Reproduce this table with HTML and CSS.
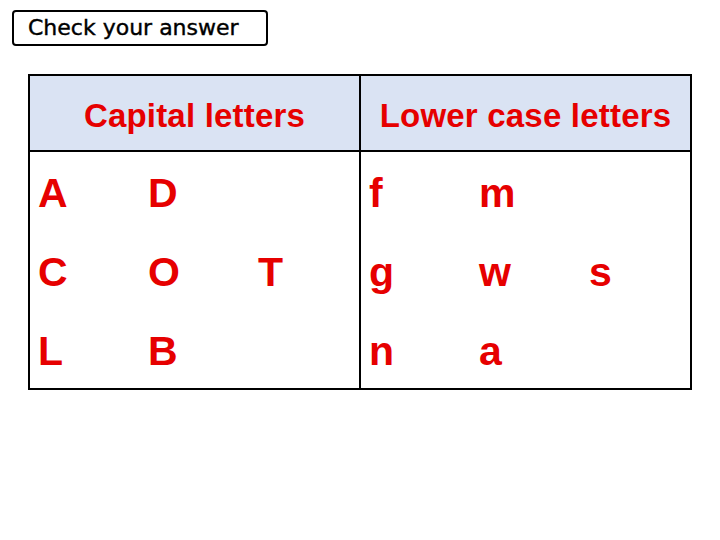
FILE: index.html
```html
<!DOCTYPE html>
<html>
<head>
<meta charset="utf-8">
<link rel="stylesheet" href="styles.css">
</head>
<body>
<div class="check">Check your answer</div>
<div class="table">
  <div class="head head-left">Capital letters</div>
  <div class="head">Lower case letters</div>
  <div class="cell cell-left">
    <span>A</span><span>D</span><span></span>
    <span>C</span><span>O</span><span>T</span>
    <span>L</span><span>B</span><span></span>
  </div>
  <div class="cell">
    <span>f</span><span>m</span><span></span>
    <span>g</span><span>w</span><span>s</span>
    <span>n</span><span>a</span><span></span>
  </div>
</div>
</body>
</html>
```
FILE: styles.css
```css
body {
  margin: 0;
  background: #ffffff;
  font-family: "Liberation Sans", Arial, sans-serif;
}
.check {
  box-sizing: border-box;
  margin: 10px 0 0 12px;
  width: 256px;
  height: 36px;
  border: 2px solid #000;
  border-radius: 4px;
  font-family: "DejaVu Sans", sans-serif;
  font-size: 22px;
  line-height: 31px;
  padding-left: 14px;
  color: #000;
  -webkit-text-stroke: 0.4px #000;
}
.table {
  box-sizing: border-box;
  margin: 28px 0 0 28px;
  width: 664px;
  border: 2px solid #000;
  display: grid;
  grid-template-columns: 331px 329px;
}
.head {
  box-sizing: border-box;
  height: 76px;
  padding-top: 3px;
  background: #dae3f3;
  border-bottom: 2px solid #000;
  color: #e60000;
  font-weight: bold;
  font-size: 33px;
  letter-spacing: 0.2px;
  text-align: center;
  line-height: 73px;
}
.head-left, .cell-left {
  border-right: 2px solid #000;
}
.cell {
  display: grid;
  grid-template-columns: 110px 110px 1fr;
  padding: 2px 0 0 8px;
  height: 236px;
  box-sizing: border-box;
  color: #e60000;
  font-weight: bold;
  font-size: 41px;
  line-height: 79px;
}
```
